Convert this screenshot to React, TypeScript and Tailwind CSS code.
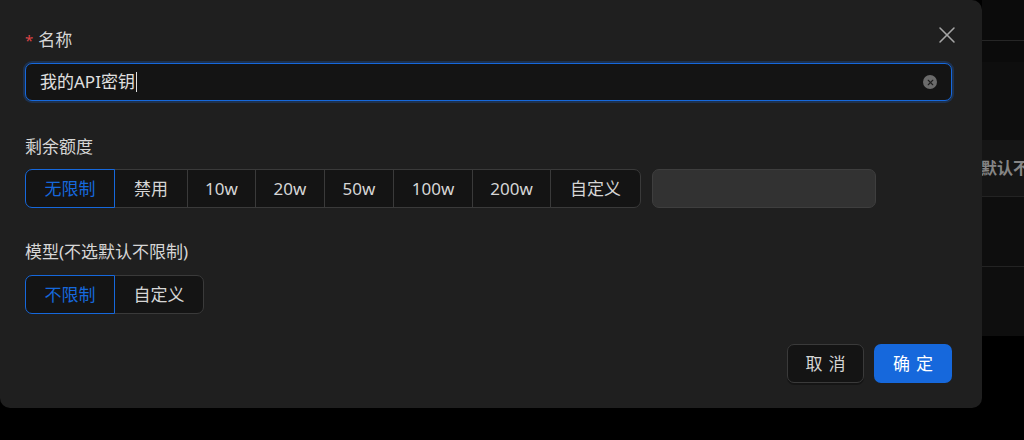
import { X } from "lucide-react";

const quota = [
  { label: "无限制", w: "w-[90px]" },
  { label: "禁用", w: "w-[74px]" },
  { label: "10w", w: "w-[69px]" },
  { label: "20w", w: "w-[70px]" },
  { label: "50w", w: "w-[70px]" },
  { label: "100w", w: "w-[80px]" },
  { label: "200w", w: "w-[79px]" },
  { label: "自定义", w: "w-[91px]" },
];

const models = [
  { label: "不限制", w: "w-[90px]" },
  { label: "自定义", w: "w-[90px]" },
];

function Segmented({
  items,
  selected,
}: {
  items: { label: string; w: string }[];
  selected: number;
}) {
  return (
    <div className="flex h-[39px]">
      {items.map((item, i) => {
        const first = i === 0;
        const last = i === items.length - 1;
        const active = i === selected;
        return (
          <div
            key={item.label}
            className={`${item.w} ${first ? "rounded-l-[7px]" : "-ml-px"} ${
              last ? "rounded-r-[7px]" : ""
            } ${
              active
                ? "relative z-10 border-[#1668dc] text-[#1668dc]"
                : "border-[#3a3a3a] text-[#d6d6d6]"
            } flex items-center justify-center border bg-[#141414] text-[17px]`}
          >
            {item.label}
          </div>
        );
      })}
    </div>
  );
}

function SpacedText({ chars }: { chars: string[] }) {
  return (
    <span className="flex justify-center gap-[6px]">
      {chars.map((c) => (
        <span key={c}>{c}</span>
      ))}
    </span>
  );
}

export default function App() {
  return (
    <div className="flex h-[440px] w-[1024px] overflow-hidden bg-black font-['Noto_Sans','Noto_Sans_CJK_SC',sans-serif]">
      {/* modal */}
      <div className="relative h-[408px] w-[982px] shrink-0 rounded-tr-[10px] rounded-b-[10px] bg-[#1f1f1f] pl-[25px] pr-[30px] pt-[28px]">
        <button className="absolute right-[21px] top-[21px] text-[#a6a6a6]">
          <X size={28} strokeWidth={1.3} />
        </button>

        <div className="flex h-[24px] items-center text-[17px] text-[#d6d6d6]">
          <span className="mr-[5px] text-[15px] text-[#dc4446]">*</span>
          名称
        </div>
        <div className="mt-[11px] flex h-[38px] items-center rounded-[7px] border border-[#1668dc] bg-[#141414] pl-[14px] pr-[14px] shadow-[0_0_0_2px_rgba(22,104,220,0.25)]">
          <span className="text-[17px] text-[#e0e0e0]">我的API密钥</span>
          <span className="ml-px h-[20px] w-px bg-[#e0e0e0]" />
          <span className="ml-auto flex h-[14px] w-[14px] items-center justify-center rounded-full bg-[#6b6b6b]">
            <X size={9} strokeWidth={3} className="text-[#1f1f1f]" />
          </span>
        </div>

        <div className="mt-[34px] flex h-[24px] items-center text-[17px] text-[#d6d6d6]">
          剩余额度
        </div>
        <div className="mt-[10px] flex gap-[11px]">
          <Segmented items={quota} selected={0} />
          <div className="h-[39px] w-[224px] rounded-[7px] border border-[#3e3e3e] bg-[#323232]" />
        </div>

        <div className="mt-[32px] flex h-[24px] items-center text-[17px] text-[#d6d6d6]">
          模型(不选默认不限制)
        </div>
        <div className="mt-[11px] flex">
          <Segmented items={models} selected={0} />
        </div>

        <div className="mt-[30px] flex justify-end gap-[10px]">
          <button className="h-[39px] w-[77px] rounded-[7px] border border-[#3a3a3a] bg-[#141414] text-[17px] text-[#d6d6d6] shadow-[0_2px_0_rgba(0,0,0,0.3)]">
            <SpacedText chars={["取", "消"]} />
          </button>
          <button className="h-[39px] w-[78px] rounded-[7px] bg-[#1668dc] text-[17px] text-white">
            <SpacedText chars={["确", "定"]} />
          </button>
        </div>
      </div>

      {/* page behind the mask */}
      <div className="flex w-[42px] flex-col">
        <div className="h-[40px] bg-[#0b0b0b]" />
        <div className="h-px bg-[#262626]" />
        <div className="h-[21px] bg-[#0b0b0b]" />
        <div className="h-[78px] bg-[#0e0e0e]" />
        <div className="flex h-[57px] items-center overflow-hidden whitespace-nowrap border-b border-[#232323] bg-[#151515] text-[16px] font-bold text-[#858585]">
          <span className="-ml-[1px]">默认不限制</span>
        </div>
        <div className="h-[70px] border-b border-[#232323] bg-[#0e0e0e]" />
        <div className="h-[69px] bg-[#0e0e0e]" />
      </div>
    </div>
  );
}
